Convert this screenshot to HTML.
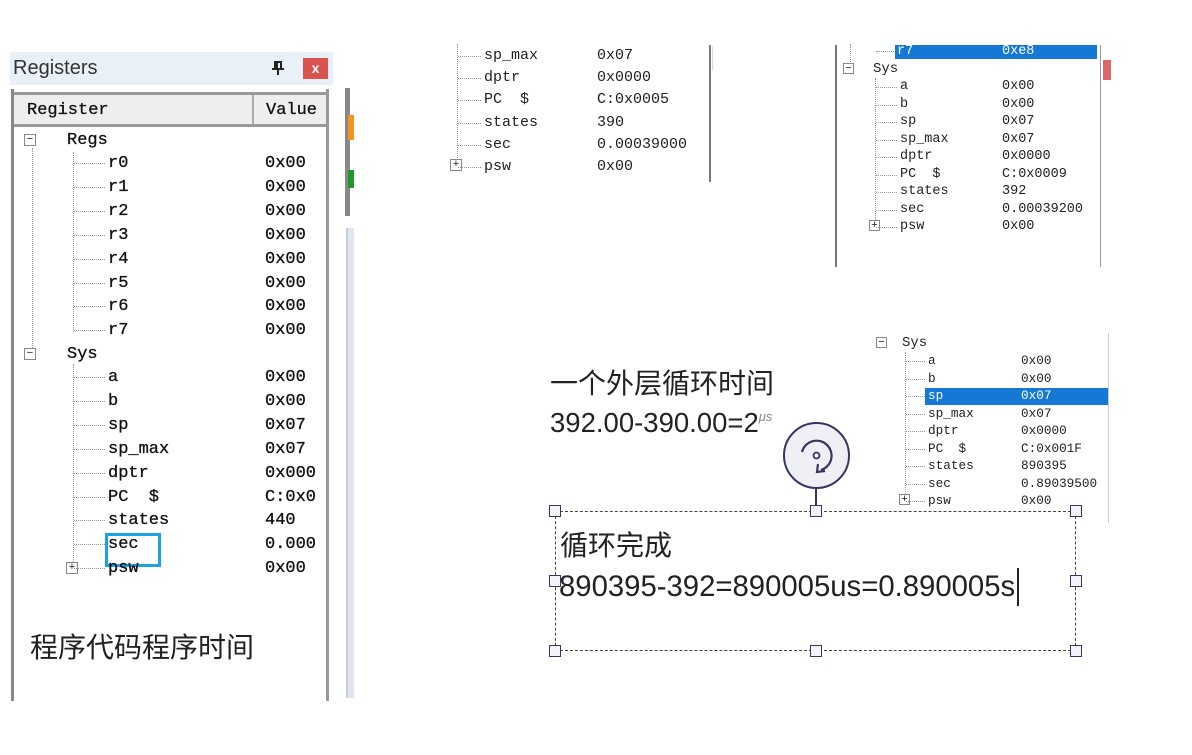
<!DOCTYPE html>
<html><head><meta charset="utf-8"><style>
*{margin:0;padding:0;box-sizing:border-box}
body{width:1192px;height:755px;background:#fff;position:relative;overflow:hidden;font-family:"Liberation Mono",monospace}
.a{position:absolute;white-space:nowrap}
.m{font-family:"Liberation Mono",monospace;font-size:17px;color:#111;line-height:20px;-webkit-text-stroke:0.3px #111}
.n{font-family:"Liberation Mono",monospace;font-size:15px;color:#222;line-height:17px}
.s{font-family:"Liberation Mono",monospace;font-size:13.5px;color:#222;line-height:15px}
.q{font-family:"Liberation Mono",monospace;font-size:12.7px;color:#222;line-height:15px}
.cj{font-family:"Liberation Sans","Noto Sans CJK SC",sans-serif;color:#222}
.dv{position:absolute;border-left:1px dotted #999}
.dh{position:absolute;border-top:1px dotted #999}
.h{position:absolute;width:12px;height:12px;border:1.5px solid #3a3560;background:#f4f4f8}
.bx{position:absolute;width:12px;height:12px;border:1px solid #888;background:#fff;font-size:11px;line-height:9px;text-align:center;color:#222;font-family:"Liberation Sans",sans-serif}
</style></head><body>
<!-- left panel -->
<div class="a" style="left:10px;top:52px;width:323px;height:33px;background:#eaf0f7"></div>
<div class="a cj" style="left:13px;top:57px;font-size:20px;color:#333">Registers</div>
<svg class="a" style="left:270px;top:60px" width="16" height="16"><path d="M4 2h8M5 2v7M11 2v7M2 9h12M8 9v6M7 2v7" stroke="#222" stroke-width="2" fill="none"/></svg>
<div class="a" style="left:303px;top:58px;width:25px;height:21px;background:#d9534f;color:#fff;font:bold 14px 'Liberation Sans';text-align:center;line-height:21px">x</div>
<div class="a" style="left:11px;top:89px;width:3px;height:612px;background:#888"></div>
<div class="a" style="left:326px;top:89px;width:3px;height:612px;background:#999"></div>
<div class="a" style="left:14px;top:92px;width:312px;height:35px;background:#eee;border-top:3px solid #999;border-bottom:3px solid #999"></div>
<div class="a" style="left:252px;top:95px;width:2px;height:29px;background:#aaa"></div>
<div class="a m" style="left:27px;top:101px">Register</div>
<div class="a m" style="left:266px;top:101px">Value</div>
<div class="a" style="left:345px;top:88px;width:5px;height:128px;background:#888"></div>
<div class="a" style="left:348px;top:115px;width:6px;height:25px;background:#f39320"></div>
<div class="a" style="left:348px;top:170px;width:6px;height:18px;background:#1d9a2a"></div>
<div class="a" style="left:346px;top:228px;width:8px;height:470px;background:#dfe6f2;border-left:2px solid #ccc"></div>
<div class="dv" style="left:32px;top:148px;height:208px"></div>
<div class="dv" style="left:73px;top:152px;height:180px"></div>
<div class="dv" style="left:73px;top:364px;height:206px"></div>
<div class="bx" style="left:24px;top:134px">−</div>
<div class="bx" style="left:24px;top:348px">−</div>
<div class="bx" style="left:66px;top:562px">+</div>
<div class="a m" style="left:67px;top:131px">Regs</div>
<div class="a m" style="left:67px;top:345px">Sys</div>
<div class="a" style="left:105px;top:533px;width:56px;height:34px;border:3px solid #1aa3e0"></div>
<div class="a cj" style="left:30px;top:626px;font-size:28px">程序代码程序时间</div>

<!-- middle top -->
<div class="dv" style="left:457px;top:44px;height:120px"></div>
<div class="a" style="left:709px;top:45px;width:2px;height:137px;background:#777"></div>
<div class="a" style="left:712px;top:46px;width:1px;height:24px;background:#cde"></div>
<div class="bx" style="left:450px;top:159px">+</div>

<!-- right top -->
<div class="a" style="left:835px;top:45px;width:2px;height:222px;background:#777"></div>
<div class="a" style="left:1100px;top:45px;width:1px;height:222px;background:#999"></div>
<div class="a" style="left:1103px;top:60px;width:8px;height:20px;background:#d66"></div>
<div class="a" style="left:895px;top:45px;width:202px;height:14px;background:#1478d4"></div>
<div class="dv" style="left:850px;top:44px;height:20px"></div>
<div class="dv" style="left:875px;top:78px;height:148px"></div>
<div class="bx" style="left:843px;top:63px;width:11px;height:11px">−</div>
<div class="bx" style="left:869px;top:220px;width:11px;height:11px">+</div>
<div class="a s" style="left:873px;top:62px;font-size:14px">Sys</div>

<!-- right lower -->
<div class="a" style="left:1108px;top:333px;width:1px;height:190px;background:#ccc"></div>
<div class="a" style="left:925px;top:388px;width:183px;height:17px;background:#1478d4"></div>
<div class="dv" style="left:905px;top:352px;height:148px"></div>
<div class="bx" style="left:876px;top:337px;width:11px;height:11px">−</div>
<div class="bx" style="left:899px;top:494px;width:11px;height:11px">+</div>
<div class="a q" style="left:902px;top:336px;font-size:14px">Sys</div>

<!-- annotations -->
<div class="a cj" style="left:550px;top:362px;font-size:28px">一个外层循环时间</div>
<div class="a cj" style="left:550px;top:407px;font-size:27.5px">392.00-390.00=2<span style="font-size:13px;color:#888;font-style:italic;vertical-align:11px">μs</span></div>
<div class="a" style="left:783px;top:422px;width:67px;height:67px;border-radius:50%;border:2px solid #3a3560;background:#eef0f6"></div>
<svg class="a" style="left:783px;top:422px" width="67" height="67" viewBox="0 0 67 67"><path d="M19 30 A15 15 0 1 1 38 48" fill="none" stroke="#3a3560" stroke-width="2.2"/><path d="M35 42 L34 50 L42 49" fill="none" stroke="#3a3560" stroke-width="2.2"/><circle cx="33.5" cy="33.5" r="3" fill="none" stroke="#3a3560" stroke-width="1.8"/></svg>
<div class="a" style="left:815px;top:489px;width:2px;height:20px;background:#3a3560"></div>
<div class="a" style="left:555px;top:511px;width:521px;height:140px;border:1.5px dashed #444"></div>
<div class="h" style="left:549px;top:505px"></div><div class="h" style="left:810px;top:505px"></div><div class="h" style="left:1070px;top:505px"></div>
<div class="h" style="left:549px;top:575px"></div><div class="h" style="left:1070px;top:575px"></div>
<div class="h" style="left:549px;top:645px"></div><div class="h" style="left:810px;top:645px"></div><div class="h" style="left:1070px;top:645px"></div>
<div class="a cj" style="left:560px;top:524px;font-size:28px">循环完成</div>
<div class="a cj" style="left:559px;top:570px;font-size:29.3px">890395-392=890005us=0.890005s</div>
<div class="a" style="left:1017px;top:568px;width:1.5px;height:38px;background:#222"></div>

<script>
function r2(list,x1,x2,y0,dy,cls,dx,lx,wh){var d=document.createElement('div');document.body.appendChild(d);var h='';list.forEach(function(r,i){var y=y0+i*dy;var c=(wh&&wh.indexOf(i)>=0)?'color:#fff;':'';h+='<div class="dh" style="left:'+lx+'px;top:'+(y+dx)+'px;width:'+(x1-lx-3)+'px"></div><div class="a '+cls+'" style="left:'+x1+'px;top:'+y+'px;'+c+'">'+r[0]+'</div><div class="a '+cls+'" style="left:'+x2+'px;top:'+y+'px;'+c+'">'+r[1]+'</div>';});d.innerHTML=h;}
r2([['r0','0x00'],['r1','0x00'],['r2','0x00'],['r3','0x00'],['r4','0x00'],['r5','0x00'],['r6','0x00'],['r7','0x00']],108,265,154,23.9,'m',9,74);
r2([['a','0x00'],['b','0x00'],['sp','0x07'],['sp_max','0x07'],['dptr','0x000'],['PC&nbsp;&nbsp;$','C:0x0'],['states','440'],['sec','0.000'],['psw','0x00']],108,265,368,23.9,'m',9,74);
r2([['sp_max','0x07'],['dptr','0x0000'],['PC&nbsp;&nbsp;$','C:0x0005'],['states','390'],['sec','0.00039000'],['psw','0x00']],484,597,47,22.2,'n',9,458);
r2([['r7','0xe8']],897,1002,44,17.4,'s',7,876,[0]);
r2([['a','0x00'],['b','0x00'],['sp','0x07'],['sp_max','0x07'],['dptr','0x0000'],['PC&nbsp;&nbsp;$','C:0x0009'],['states','392'],['sec','0.00039200'],['psw','0x00']],900,1002,79,17.5,'s',8,876);
r2([['a','0x00'],['b','0x00'],['sp','0x07'],['sp_max','0x07'],['dptr','0x0000'],['PC&nbsp;&nbsp;$','C:0x001F'],['states','890395'],['sec','0.89039500'],['psw','0x00']],928,1021,353,17.5,'q',8,906,[2]);
</script>
</body></html>
